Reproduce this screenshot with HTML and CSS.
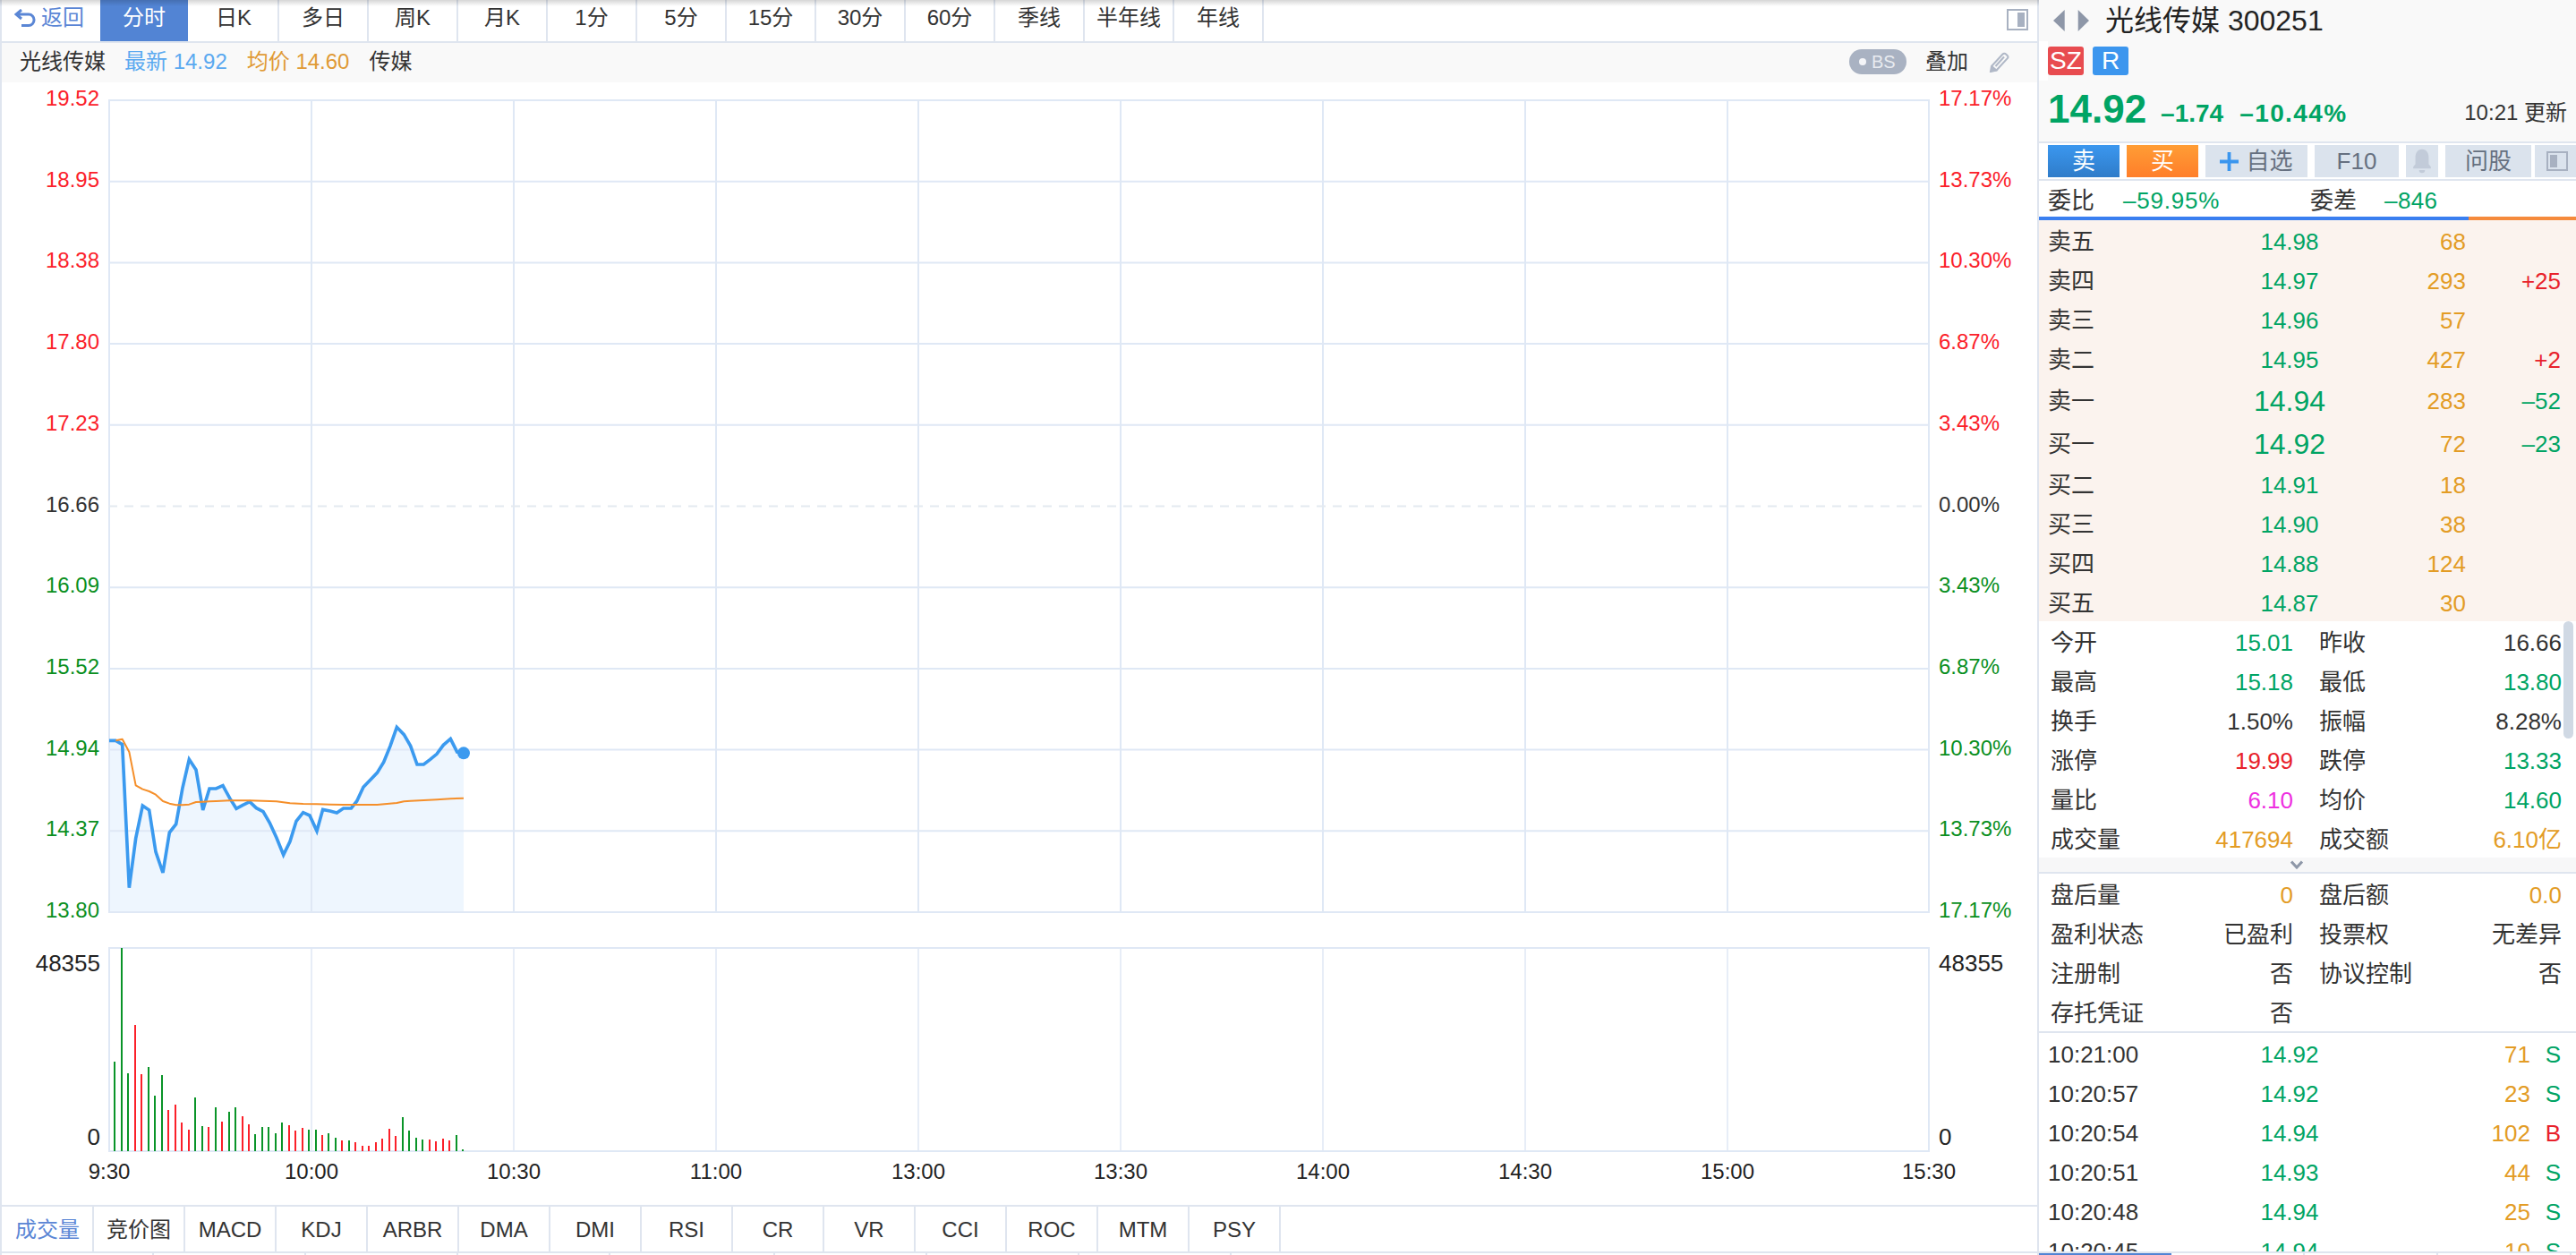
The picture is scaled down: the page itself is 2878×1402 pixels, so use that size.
FILE: index.html
```html
<!DOCTYPE html>
<html lang="zh">
<head>
<meta charset="utf-8">
<title>光线传媒 300251</title>
<link rel="stylesheet" href="styles.css">
</head>
<body>
<div class="app">
  <div class="top-shade"></div>
  <main class="left">
    <nav class="periods">
      <a class="back"><svg class="back-ico" viewBox="0 0 24 20"><path d="M8 1 2 6l6 5M3 6h13a6 6 0 0 1 6 6.500A6 6 0 0 1 16 18.500H8"/></svg>返回</a>
      <a class="period active">分时</a><a class="period">日K</a><a class="period">多日</a><a class="period">周K</a><a class="period">月K</a><a class="period">1分</a><a class="period">5分</a><a class="period">15分</a><a class="period">30分</a><a class="period">60分</a><a class="period">季线</a><a class="period">半年线</a><a class="period">年线</a>
      <span class="spacer"></span>
      <svg class="toggle" viewBox="0 0 24 24"><rect x="1" y="1" width="22" height="22"/><path d="M12 4h8v16h-8z"/></svg>
    </nav>
    <div class="legend">
      <span class="lg-name">光线传媒</span>
      <span class="lg-new">最新 14.92</span>
      <span class="lg-avg">均价 14.60</span>
      <span class="lg-name lg-sector">传媒</span>
      <span class="spacer"></span>
      <span class="bs"><i class="bs-dot"></i>BS</span>
      <span class="lg-over">叠加</span>
      <svg class="pencil" viewBox="0 0 24 24"><path class="pencil-body" d="M3 17 15.500 3.500a2.500 2.500 0 0 1 3.600 0l1.500 1.400a2.500 2.500 0 0 1 0 3.500L8.500 21.500 2 23z"/><path class="pencil-tip" d="M1.500 23.500 3 15.500l7.500 6.500z"/><path class="pencil-body" d="M7.500 17 17 6.500"/></svg>
    </div>
    <svg class="chart" viewBox="2 92 2274 1254" width="2274" height="1254">
      <path class="area" transform="translate(100 780) scale(.33333)" d="M66 142 88 142 110 155 133 635 155 470 178 360 200 375 222 515 246 585 268 450 290 422 312 300 334 205 357 240 380 375 402 303 424 303 447 293 470 335 492 370 514 358 537 347 559 368 582 380 604 418 627 468 650 525 672 480 693 412 716 383 738 393 762 445 782 373 806 378 829 384 851 369 877 369 896 345 918 298 942 273 964 250 986 214 1008 160 1030 97 1054 122 1076 160 1098 222 1120 222 1142 205 1164 187 1186 157 1210 136 1232 180 1254 184V717H66Z"/>
      <path class="grid" d="M121 112H2156M121 202.700H2156M121 293.400H2156M121 384.100H2156M121 474.800H2156M121 656.200H2156M121 746.900H2156M121 837.600H2156M121 928.300H2156M121 1019H2156M122 111V1020M348 111V1020M574 111V1020M800 111V1020M1026 111V1020M1252 111V1020M1478 111V1020M1704 111V1020M1930 111V1020M2155 111V1020"/>
      <path class="dash" d="M121 565.500H2156"/>
      <path class="grid" d="M121 1059H2156M121 1286H2156M122 1058V1287M2155 1058V1287"/>
      <path class="grid-thin" d="M348 1059V1286M574 1059V1286M800 1059V1286M1026 1059V1286M1252 1059V1286M1478 1059V1286M1704 1059V1286M1930 1059V1286"/>
      <g transform="translate(100 780) scale(.33333)">
        <path class="price-line" d="M66 142 88 142 110 155 133 635 155 470 178 360 200 375 222 515 246 585 268 450 290 422 312 300 334 205 357 240 380 375 402 303 424 303 447 293 470 335 492 370 514 358 537 347 559 368 582 380 604 418 627 468 650 525 672 480 693 412 716 383 738 393 762 445 782 373 806 378 829 384 851 369 877 369 896 345 918 298 942 273 964 250 986 214 1008 160 1030 97 1054 122 1076 160 1098 222 1120 222 1142 205 1164 187 1186 157 1210 136 1232 180 1254 184"/>
        <path class="avg-line" d="M88 142 110 137 133 180 155 292 178 305 200 312 222 323 246 345 268 353 290 358 312 358 334 356 357 348 380 347 402 346 424 345 470 343 537 343 582 344 627 346 672 352 716 354 762 355 806 356 851 357 896 357 964 357 1030 351 1054 346 1076 344 1120 342 1164 340 1210 337 1254 335"/>
        <circle class="dot" cx="1254" cy="184" r="21"/>
      </g>
      <g transform="translate(0 1040) scale(.35714 .33333)">
        <path class="vol-dn" d="M359 737V437M380 737V58M401 737V478M464 737V456M485 737V552M506 737V484M611 737V559M632 737V654M674 737V591M716 737V606M737 737V591M799 737V680M820 737V657M841 737V657M862 737V678M883 737V642M967 737V666M988 737V666M1029 737V678M1050 737V693M1092 737V701M1260 737V623M1281 737V669M1302 737V693M1323 737V699M1428 737V685M1449 737V733"/>
        <path class="vol-up" d="M422 737V315M443 737V479M527 737V600M548 737V582M569 737V642M590 737V666M653 737V657M695 737V638M758 737V622M778 737V648M904 737V651M925 737V670M946 737V660M1008 737V684M1071 737V702M1113 737V709M1134 737V721M1155 737V721M1176 737V709M1197 737V697M1218 737V663M1239 737V688M1344 737V698M1365 737V705M1386 737V696M1407 737V702"/>
      </g>
      <g class="axis-l">
        <text class="up" y="118" x="111">19.52</text>
        <text class="up" y="208.700" x="111">18.95</text>
        <text class="up" y="299.400" x="111">18.38</text>
        <text class="up" y="390.100" x="111">17.80</text>
        <text class="up" y="480.800" x="111">17.23</text>
        <text class="flat" y="571.500" x="111">16.66</text>
        <text class="dn" y="662.200" x="111">16.09</text>
        <text class="dn" y="752.900" x="111">15.52</text>
        <text class="dn" y="843.600" x="111">14.94</text>
        <text class="dn" y="934.300" x="111">14.37</text>
        <text class="dn" y="1025" x="111">13.80</text>
      </g>
      <g class="axis-r">
        <text class="up" y="118" x="2166">17.17%</text>
        <text class="up" y="208.700" x="2166">13.73%</text>
        <text class="up" y="299.400" x="2166">10.30%</text>
        <text class="up" y="390.100" x="2166">6.87%</text>
        <text class="up" y="480.800" x="2166">3.43%</text>
        <text class="flat" y="571.500" x="2166">0.00%</text>
        <text class="dn" y="662.200" x="2166">3.43%</text>
        <text class="dn" y="752.900" x="2166">6.87%</text>
        <text class="dn" y="843.600" x="2166">10.30%</text>
        <text class="dn" y="934.300" x="2166">13.73%</text>
        <text class="dn" y="1025" x="2166">17.17%</text>
      </g>
      <text class="vol-l" x="112" y="1085">48355</text>
      <text class="vol-l" x="112" y="1279">0</text>
      <text class="vol-r" x="2166" y="1085">48355</text>
      <text class="vol-r" x="2166" y="1279">0</text>
      <g class="axis-t">
        <text x="122" y="1317">9:30</text>
        <text x="348" y="1317">10:00</text>
        <text x="574" y="1317">10:30</text>
        <text x="800" y="1317">11:00</text>
        <text x="1026" y="1317">13:00</text>
        <text x="1252" y="1317">13:30</text>
        <text x="1478" y="1317">14:00</text>
        <text x="1704" y="1317">14:30</text>
        <text x="1930" y="1317">15:00</text>
        <text x="2155" y="1317">15:30</text>
      </g>
    </svg>
    <nav class="indicators">
      <a class="ind active">成交量</a><a class="ind">竞价图</a><a class="ind">MACD</a><a class="ind">KDJ</a><a class="ind">ARBR</a><a class="ind">DMA</a><a class="ind">DMI</a><a class="ind">RSI</a><a class="ind">CR</a><a class="ind">VR</a><a class="ind">CCI</a><a class="ind">ROC</a><a class="ind">MTM</a><a class="ind">PSY</a>
    </nav>
    <div class="left-foot"><i></i><i></i><i></i><i></i><i class="wide"></i><i></i><i></i><i></i></div>
  </main>

  <aside class="right">
    <header class="head">
      <div class="title-row">
        <svg class="nav-arrows" viewBox="0 0 40 24"><path d="M12.700 0v24L0 12zM27.700 0v24L40 12z"/></svg>
        <h1 class="title">光线传媒 300251</h1>
      </div>
      <div class="badges"><b class="badge sz">SZ</b><b class="badge r">R</b></div>
      <div class="quote">
        <strong class="q-price">14.92</strong>
        <span class="q-chg">–1.74</span>
        <span class="q-pct">–10.44%</span>
        <span class="spacer"></span>
        <span class="q-time">10:21 更新</span>
      </div>
    </header>
    <div class="actions">
      <a class="btn sell">卖</a>
      <a class="btn buy">买</a>
      <a class="btn fav"><svg class="plus" viewBox="0 0 20 20"><path d="M8.200 0h3.600v8.200H20v3.600h-8.200V20H8.200v-8.200H0V8.200h8.200z"/></svg>自选</a>
      <a class="btn f10">F10</a>
      <a class="btn bell"><svg class="bell-ico" viewBox="0 0 24 34"><path d="M12 1c6 0 9 5 9 11v9l3 4v2H0v-2l3-4v-9C3 6 6 1 12 1z"/><path d="M8 29h8a4 4 0 0 1-8 0z"/></svg></a>
      <a class="btn ask">问股</a>
      <a class="btn side"><svg class="side-ico" viewBox="0 0 24 22"><rect x="1" y="1" width="22" height="20"/><path d="M4 4h8v14H4z"/></svg></a>
    </div>
    <div class="ratio">
      <span class="ratio-a">委比</span><span class="ratio-b g">–59.95%</span>
      <span class="ratio-c">委差</span><span class="ratio-d g">–846</span>
    </div>
    <div class="ratio-bar"><i class="bar-blue"></i><i class="bar-orange"></i></div>

    <section class="book">
      <div class="bk"><span>卖五</span><span class="bk-p g">14.98</span><span class="bk-q o">68</span><span class="bk-d"></span></div>
      <div class="bk"><span>卖四</span><span class="bk-p g">14.97</span><span class="bk-q o">293</span><span class="bk-d red">+25</span></div>
      <div class="bk"><span>卖三</span><span class="bk-p g">14.96</span><span class="bk-q o">57</span><span class="bk-d"></span></div>
      <div class="bk"><span>卖二</span><span class="bk-p g">14.95</span><span class="bk-q o">427</span><span class="bk-d red">+2</span></div>
      <div class="bk best"><span>卖一</span><span class="bk-p g">14.94</span><span class="bk-q o">283</span><span class="bk-d g">–52</span></div>
      <div class="bk best"><span>买一</span><span class="bk-p g">14.92</span><span class="bk-q o">72</span><span class="bk-d g">–23</span></div>
      <div class="bk"><span>买二</span><span class="bk-p g">14.91</span><span class="bk-q o">18</span><span class="bk-d"></span></div>
      <div class="bk"><span>买三</span><span class="bk-p g">14.90</span><span class="bk-q o">38</span><span class="bk-d"></span></div>
      <div class="bk"><span>买四</span><span class="bk-p g">14.88</span><span class="bk-q o">124</span><span class="bk-d"></span></div>
      <div class="bk"><span>买五</span><span class="bk-p g">14.87</span><span class="bk-q o">30</span><span class="bk-d"></span></div>
    </section>

    <section class="stats main-stats">
      <div class="st"><span>今开</span><span class="g">15.01</span></div><div class="st"><span>昨收</span><span>16.66</span></div>
      <div class="st"><span>最高</span><span class="g">15.18</span></div><div class="st"><span>最低</span><span class="g">13.80</span></div>
      <div class="st"><span>换手</span><span>1.50%</span></div><div class="st"><span>振幅</span><span>8.28%</span></div>
      <div class="st"><span>涨停</span><span class="red">19.99</span></div><div class="st"><span>跌停</span><span class="g">13.33</span></div>
      <div class="st"><span>量比</span><span class="mag">6.10</span></div><div class="st"><span>均价</span><span class="g">14.60</span></div>
      <div class="st"><span>成交量</span><span class="o">417694</span></div><div class="st"><span>成交额</span><span class="o">6.10亿</span></div>
      <div class="scroll-thumb"></div>
    </section>
    <div class="expand"><svg class="chev" viewBox="0 0 14 10"><path d="M1 1.500 7 8l6-6.500"/></svg></div>
    <section class="stats extra">
      <div class="st"><span>盘后量</span><span class="o">0</span></div><div class="st"><span>盘后额</span><span class="o">0.0</span></div>
      <div class="st"><span>盈利状态</span><span>已盈利</span></div><div class="st"><span>投票权</span><span>无差异</span></div>
      <div class="st"><span>注册制</span><span>否</span></div><div class="st"><span>协议控制</span><span>否</span></div>
      <div class="st"><span>存托凭证</span><span>否</span></div><div class="st"></div>
    </section>

    <section class="trades">
      <div class="tr"><span>10:21:00</span><span class="tr-p g">14.92</span><span class="tr-q o">71</span><span class="tr-s g">S</span></div>
      <div class="tr"><span>10:20:57</span><span class="tr-p g">14.92</span><span class="tr-q o">23</span><span class="tr-s g">S</span></div>
      <div class="tr"><span>10:20:54</span><span class="tr-p g">14.94</span><span class="tr-q o">102</span><span class="tr-s red">B</span></div>
      <div class="tr"><span>10:20:51</span><span class="tr-p g">14.93</span><span class="tr-q o">44</span><span class="tr-s g">S</span></div>
      <div class="tr"><span>10:20:48</span><span class="tr-p g">14.94</span><span class="tr-q o">25</span><span class="tr-s g">S</span></div>
      <div class="tr"><span>10:20:45</span><span class="tr-p g">14.94</span><span class="tr-q o">10</span><span class="tr-s g">S</span></div>
    </section>
    <div class="right-foot"><i class="on"></i><i></i><i></i><i></i></div>
  </aside>
</div>
</body>
</html>
```
FILE: styles.css
```css
* { box-sizing: border-box; }
html, body { margin: 0; padding: 0; background: #fff; }
body {
  font-family: "Liberation Sans", "Noto Sans CJK SC", sans-serif;
  font-size: 24px;
  line-height: 1;
  color: #333;
}
a { color: inherit; text-decoration: none; }
i { font-style: normal; }

.app { display: flex; width: 2878px; height: 1402px; overflow: hidden; position: relative; }
.top-shade {
  position: absolute; left: 0; right: 0; top: 0; height: 7px; pointer-events: none;
  background: linear-gradient(rgba(0,0,0,.16), rgba(0,0,0,0));
}
.spacer { flex: 1; }

/* left */
.left {
  width: 2278px; flex: none; display: flex; flex-direction: column;
  border-left: 2px solid #dfe5ef; border-right: 2px solid #dfe5ef;
}
.periods { display: flex; height: 48px; flex: none; border-bottom: 2px solid #dfe5ef; }
.back {
  width: 110px; display: flex; align-items: center; padding: 0 0 6px 14px; gap: 6px; color: #5a86d5;
}
.back-ico { width: 24px; height: 20px; fill: none; stroke: #5a86d5; stroke-width: 3; }
.period {
  width: 100px; display: flex; align-items: center; justify-content: center;
  padding-bottom: 6px; border-right: 2px solid #dfe5ef;
}
.period.active { background: #5284d4; color: #fff; border-right-color: #fff; }
.toggle { width: 24px; height: 24px; margin: 10px 10px 0 0; }
.toggle rect { fill: none; stroke: #a8b1c1; stroke-width: 2; }
.toggle path { fill: #a8b1c1; }

.legend { display: flex; align-items: center; height: 44px; flex: none; background: #f9f9f9; padding: 0 0 2px 20px; }
.lg-name { color: #333; }
.lg-new { color: #5aa9f0; margin-left: 21px; }
.lg-avg { color: #e09a35; margin-left: 22px; }
.lg-sector { margin-left: 22px; }
.bs {
  width: 64px; height: 28px; border-radius: 14px; background: #a9b2c2; color: #e8ebf0;
  font-size: 20px; display: flex; align-items: center; padding-left: 11px; gap: 6px;
}
.bs-dot { width: 8px; height: 8px; border-radius: 50%; background: #f4f5f8; flex: none; }
.lg-over { margin-left: 21px; }
.pencil { width: 24px; height: 24px; margin: 0 30px 0 23px; }
.pencil-body { fill: none; stroke: #b0b8c7; stroke-width: 2; }
.pencil-tip { fill: #b0b8c7; }

.chart { display: block; flex: none; }
.chart text { font-size: 24px; }
.grid { fill: none; stroke: #dfe8f5; stroke-width: 2; }
.grid-thin { fill: none; stroke: #dfe8f5; stroke-width: 1.500; }
.dash { fill: none; stroke: #e4e9f0; stroke-width: 2; stroke-dasharray: 10 8; }
.area { fill: #eef6fe; }
.price-line { fill: none; stroke: #3b9aef; stroke-width: 11; stroke-linejoin: miter; }
.avg-line { fill: none; stroke: #f58f2a; stroke-width: 6; stroke-linejoin: round; }
.dot { fill: #3b9aef; }
.vol-dn { fill: none; stroke: #0a9428; stroke-width: 5.600; shape-rendering: crispEdges; }
.vol-up { fill: none; stroke: #fb2029; stroke-width: 5.600; shape-rendering: crispEdges; }
.axis-l text { text-anchor: end; }
.up { fill: #fb2029; }
.dn { fill: #0a8f1e; }
.flat { fill: #333; }
.chart .vol-l { font-size: 26px; text-anchor: end; fill: #222; }
.chart .vol-r { font-size: 26px; fill: #222; }
.axis-t text { text-anchor: middle; fill: #222; }

.indicators {
  display: flex; height: 52px; flex: none; padding-left: 1px;
  border-top: 2px solid #dfe5ef; border-bottom: 0;
}
.ind { width: 102px; display: flex; align-items: center; justify-content: center; padding-top: 2px; border-right: 2px solid #dfe5ef; }
.ind.active { color: #5a86d5; }
.left-foot { display: flex; flex: 1; border-top: 2px solid #dfe5ef; }
.left-foot i { width: 170px; border-right: 2px solid #dfe5ef; }
.left-foot .wide { width: 184px; }

/* right */
.right { flex: 1; min-width: 0; display: flex; flex-direction: column; position: relative; }
.head { height: 160px; flex: none; background: #f9f9f9; border-bottom: 2px solid #dfe5ef; }
.title-row { height: 46px; display: flex; align-items: center; padding-left: 16px; }
.nav-arrows { width: 40px; height: 24px; fill: #8e97a8; flex: none; }
.title { margin: 0 0 0 18px; font-size: 32px; font-weight: 400; color: #222; }
.badges { height: 44px; display: flex; align-items: center; gap: 10px; border-left: 10px solid #fff; }
.badge { width: 40px; height: 32px; border-radius: 3px; color: #fff; font-weight: 400; font-size: 28px; display: flex; align-items: center; justify-content: center; }
.badge.sz { background: #e84c50; }
.badge.r { background: #3c96ee; }
.quote { height: 68px; display: flex; align-items: center; padding: 0 10px 4px 10px; color: #00a464; }
.q-price { font-size: 44px; font-weight: 700; }
.q-chg { font-size: 28px; font-weight: 700; margin: 10px 0 0 16px; }
.q-pct { font-size: 28px; font-weight: 700; margin: 10px 0 0 18px; letter-spacing: 1.400px; }
.q-time { color: #333; margin-top: 8px; }

.actions { height: 42px; flex: none; display: flex; gap: 8px; padding: 2px 0 4px 10px; border-bottom: 2px solid #dfe5ef; overflow: hidden; }
.btn { display: flex; align-items: center; justify-content: center; background: #dbe3ed; color: #667080; flex: none; height: 36px; font-size: 26px; }
.sell { width: 80px; background: linear-gradient(#3b97ef, #2f7cc9); color: #fff; }
.buy { width: 80px; background: linear-gradient(#ff9d35, #ff7e2a); color: #fff; }
.fav { width: 114px; gap: 8px; }
.plus { width: 21px; height: 21px; fill: #3b96ee; }
.f10 { width: 94px; }
.bell { width: 36px; }
.bell-ico { width: 22px; height: 28px; fill: #c2cbd9; }
.ask { width: 96px; }
.side { width: 60px; margin-left: -4px; justify-content: flex-start; padding-left: 13px; }
.side-ico { width: 24px; height: 22px; }
.side-ico rect { fill: none; stroke: #a8b1c1; stroke-width: 2; }
.side-ico path { fill: #a8b1c1; }

.ratio { height: 40px; flex: none; display: flex; align-items: center; padding: 3px 0 0 10px; font-size: 26px; }
.ratio-b { margin-left: 32px; width: 209px; letter-spacing: .8px; }
.ratio-d { margin-left: 31px; letter-spacing: .4px; }
.ratio-bar { display: flex; height: 4px; flex: none; }
.bar-blue { width: 480px; background: #3a7ff0; }
.bar-orange { flex: 1; background: #f58a3c; }

.g { color: #00a464; }
.o { color: #e39c25; }
.red { color: #e8222b; }
.mag { color: #ee2fe0; }

.book { height: 448px; flex: none; background: #fbf3ee; }
.bk {
  display: grid; grid-template-columns: 160px 220px 87px 106px; height: 44px; align-items: center;
  padding: 3px 0 0 10px; font-size: 26px;
}
.bk.best { height: 48px; }
.bk-p { text-align: center; }
.best .bk-p { font-size: 32px; }
.bk-q, .bk-d { text-align: right; }

.stats { display: grid; grid-template-columns: 271px 271px; column-gap: 29px; padding-left: 13px; grid-auto-rows: 44px; flex: none; position: relative; }
.main-stats { height: 264px; }
.extra { height: 178px; border-bottom: 2px solid #dfe5ef; }
.st { display: flex; justify-content: space-between; align-items: center; padding-top: 3px; font-size: 26px; }
.scroll-thumb { position: absolute; left: 586px; top: 0; width: 11px; height: 131px; border-radius: 6px; background: #d0d9e4; }
.expand { height: 18px; flex: none; background: #f7f7f8; border-bottom: 2px solid #dfe5ef; display: flex; justify-content: center; padding: 3px 25px 0 0; }
.chev { width: 14px; height: 10px; fill: none; stroke: #8e97a8; stroke-width: 3; }

.trades { flex: 1; min-height: 0; overflow: hidden; }
.tr { display: grid; grid-template-columns: 160px 220px 159px 34px; height: 44px; align-items: center; padding: 3px 0 0 10px; font-size: 26px; }
.tr-p { text-align: center; }
.tr-q, .tr-s { text-align: right; }
.right-foot { display: flex; height: 4px; flex: none; border-top: 2px solid #dfe5ef; }
.right-foot i { width: 149px; border-right: 2px solid #dfe5ef; }
.right-foot .on { width: 148px; background: #5284d4; border-right: 0; }
```
